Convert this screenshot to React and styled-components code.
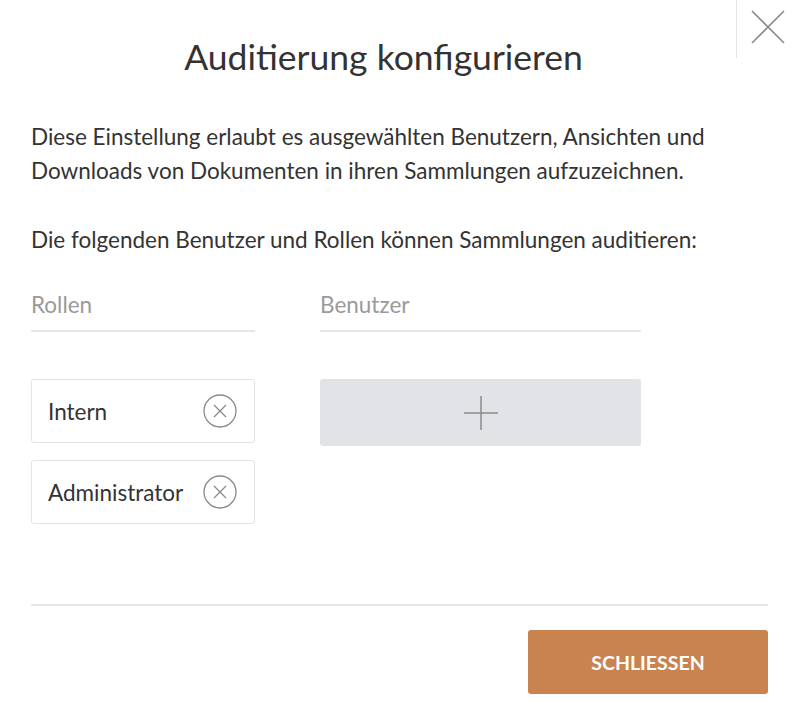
import React from 'react';
import styled, { createGlobalStyle } from 'styled-components';

const GlobalStyle = createGlobalStyle`
    html, body {
        margin: 0;
        padding: 0;
        background: #ffffff;
    }
    body {
        font-family: Lato, "Open Sans", "Liberation Sans", sans-serif;
        color: #333333;
    }
`;

const roles = ['Intern', 'Administrator'];

const CircleX = () => (
    <svg width="34" height="34" viewBox="0 0 34 34" fill="none" stroke="#8a8a8a" strokeWidth="1.3">
        <circle cx="17" cy="17" r="16" />
        <path d="M11 11 L23 23 M23 11 L11 23" />
    </svg>
);

const PlusIcon = () => (
    <svg width="34" height="34" viewBox="0 0 34 34" fill="none" stroke="#8c8c8c" strokeWidth="1.5">
        <path d="M17 0 V34 M0 17 H34" />
    </svg>
);

const CloseIcon = () => (
    <svg width="34" height="34" viewBox="0 0 34 34" fill="none" stroke="#8c8c8c" strokeWidth="1.6">
        <path d="M1 1 L33 33 M33 1 L1 33" />
    </svg>
);

const App = () => {
    return (
        <Dialog>
            <GlobalStyle />
            <Header>
                <Title>Auditierung konfigurieren</Title>
                <CloseButton aria-label="Schließen">
                    <CloseIcon />
                </CloseButton>
            </Header>
            <Body>
                <Paragraph>
                    Diese Einstellung erlaubt es ausgewählten Benutzern, Ansichten und
                    Downloads von Dokumenten in ihren Sammlungen aufzuzeichnen.
                </Paragraph>
                <Paragraph>
                    Die folgenden Benutzer und Rollen können Sammlungen auditieren:
                </Paragraph>
                <Columns>
                    <Column width={224}>
                        <ColumnLabel>Rollen</ColumnLabel>
                        <ChipList>
                            {roles.map((role) => (
                                <Chip key={role}>
                                    <ChipText>{role}</ChipText>
                                    <RemoveButton aria-label={`${role} entfernen`}>
                                        <CircleX />
                                    </RemoveButton>
                                </Chip>
                            ))}
                        </ChipList>
                    </Column>
                    <Column width={321}>
                        <ColumnLabel>Benutzer</ColumnLabel>
                        <ChipList>
                            <AddButton aria-label="Benutzer hinzufügen">
                                <PlusIcon />
                            </AddButton>
                        </ChipList>
                    </Column>
                </Columns>
            </Body>
            <Footer>
                <PrimaryButton>SCHLIESSEN</PrimaryButton>
            </Footer>
        </Dialog>
    );
}

const Dialog = styled.div`
    width: 796px;
    height: 716px;
    background: #ffffff;
    overflow: hidden;
`;

const Header = styled.div`
    display: flex;
    align-items: flex-start;
    padding-left: 31px;
`;

const Title = styled.h1`
    flex: 1;
    margin: 0;
    padding-top: 37px;
    font-size: 35.5px;
    line-height: 40px;
    font-weight: 400;
    text-align: center;
    color: #333333;
`;

const CloseButton = styled.button`
    width: 60px;
    height: 58px;
    display: flex;
    align-items: flex-start;
    justify-content: center;
    padding: 10px 0 0 2px;
    border: none;
    border-left: 1px solid #e4e4e4;
    background: transparent;
    cursor: pointer;
`;

const Body = styled.div`
    padding: 0 28px 80px 31px;
`;

const Paragraph = styled.p`
    margin: 43px 0 0;
    font-size: 22.5px;
    line-height: 34px;
    color: #333333;

    & + & {
        margin-top: 35px;
    }
`;

const Columns = styled.div`
    display: flex;
    gap: 65px;
    margin-top: 31px;
`;

const Column = styled.div`
    width: ${props => props.width}px;
    display: flex;
    flex-direction: column;
`;

const ColumnLabel = styled.div`
    font-size: 22.5px;
    line-height: 34px;
    color: #9a9a9a;
    padding-bottom: 8px;
    border-bottom: 2px solid #e6e6e6;
`;

const ChipList = styled.div`
    display: flex;
    flex-direction: column;
    gap: 17px;
    margin-top: 47px;
`;

const Chip = styled.div`
    height: 64px;
    box-sizing: border-box;
    display: flex;
    align-items: center;
    justify-content: space-between;
    padding: 0 17px 0 16px;
    border: 1px solid #e3e3e3;
    border-radius: 3px;
`;

const ChipText = styled.span`
    font-size: 22.5px;
    color: #333333;
`;

const RemoveButton = styled.button`
    display: flex;
    padding: 0;
    border: none;
    background: transparent;
    cursor: pointer;
`;

const AddButton = styled.button`
    height: 67px;
    display: flex;
    align-items: center;
    justify-content: center;
    border: none;
    border-radius: 3px;
    background: #e2e3e6;
    cursor: pointer;
`;

const Footer = styled.div`
    margin: 0 28px 0 31px;
    padding-top: 24px;
    border-top: 2px solid #e6e6e6;
    display: flex;
    justify-content: flex-end;
`;

const PrimaryButton = styled.button`
    width: 240px;
    height: 64px;
    border: none;
    border-radius: 3px;
    background: #c8834f;
    color: #ffffff;
    font-family: Lato, "Open Sans", "Liberation Sans", sans-serif;
    font-size: 19.5px;
    font-weight: 700;
    cursor: pointer;
`;

export default App;
